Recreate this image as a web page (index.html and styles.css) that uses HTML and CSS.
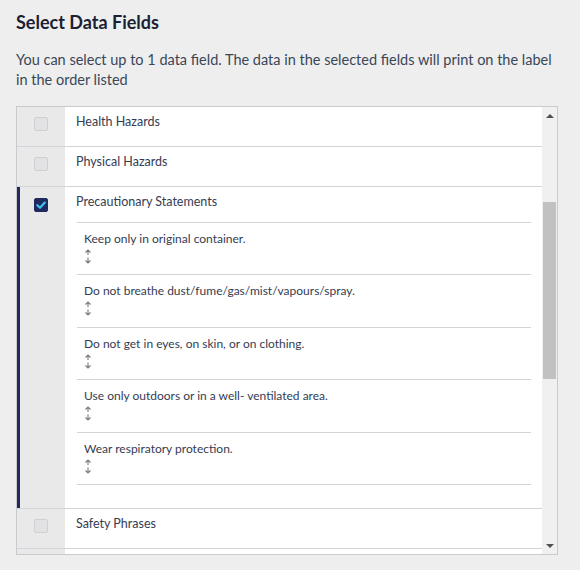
FILE: index.html
```html
<!DOCTYPE html>
<html>
<head>
<meta charset="utf-8">
<link rel="stylesheet" href="styles.css">
</head>
<body>
<div class="page">
  <h1 class="title">Select Data Fields</h1>
  <p class="desc">You can select up to 1 data field. The data in the selected fields will print on the label in the order listed</p>
  <div class="box">
    <div class="list">
      <div class="row">
        <div class="check-col"><span class="cb"></span></div>
        <div class="content"><div class="label">Health Hazards</div></div>
      </div>
      <div class="row">
        <div class="check-col"><span class="cb"></span></div>
        <div class="content"><div class="label">Physical Hazards</div></div>
      </div>
      <div class="row selected">
        <div class="check-col"><span class="cb checked"><svg viewBox="0 0 14 14" width="14" height="14"><path d="M3.3 7.2 L6 9.8 L10.8 4.6" fill="none" stroke="#3cc3ef" stroke-width="2.2" stroke-linecap="round" stroke-linejoin="round"/></svg></span></div>
        <div class="content">
          <div class="label">Precautionary Statements</div>
          <ul class="sub">
            <li class="item"><div class="item-text">Keep only in original container.</div><svg class="arrows" viewBox="0 0 8 15" width="8" height="15"><path d="M4 1 V6 M1.5 3.5 L4 1 L6.5 3.5 M4 8.5 V14 M1.5 11.5 L4 14 L6.5 11.5" fill="none" stroke="#7a7a7a" stroke-width="1.1"/></svg></li>
            <li class="item"><div class="item-text">Do not breathe dust/fume/gas/mist/vapours/spray.</div><svg class="arrows" viewBox="0 0 8 15" width="8" height="15"><path d="M4 1 V6 M1.5 3.5 L4 1 L6.5 3.5 M4 8.5 V14 M1.5 11.5 L4 14 L6.5 11.5" fill="none" stroke="#7a7a7a" stroke-width="1.1"/></svg></li>
            <li class="item"><div class="item-text">Do not get in eyes, on skin, or on clothing.</div><svg class="arrows" viewBox="0 0 8 15" width="8" height="15"><path d="M4 1 V6 M1.5 3.5 L4 1 L6.5 3.5 M4 8.5 V14 M1.5 11.5 L4 14 L6.5 11.5" fill="none" stroke="#7a7a7a" stroke-width="1.1"/></svg></li>
            <li class="item"><div class="item-text">Use only outdoors or in a well- ventilated area.</div><svg class="arrows" viewBox="0 0 8 15" width="8" height="15"><path d="M4 1 V6 M1.5 3.5 L4 1 L6.5 3.5 M4 8.5 V14 M1.5 11.5 L4 14 L6.5 11.5" fill="none" stroke="#7a7a7a" stroke-width="1.1"/></svg></li>
            <li class="item"><div class="item-text">Wear respiratory protection.</div><svg class="arrows" viewBox="0 0 8 15" width="8" height="15"><path d="M4 1 V6 M1.5 3.5 L4 1 L6.5 3.5 M4 8.5 V14 M1.5 11.5 L4 14 L6.5 11.5" fill="none" stroke="#7a7a7a" stroke-width="1.1"/></svg></li>
          </ul>
        </div>
      </div>
      <div class="row">
        <div class="check-col"><span class="cb"></span></div>
        <div class="content"><div class="label">Safety Phrases</div></div>
      </div>
      <div class="row">
        <div class="check-col"><span class="cb"></span></div>
        <div class="content"><div class="label"></div></div>
      </div>
    </div>
    <div class="scrollbar">
      <div class="sb-btn"><span class="tri-up"></span></div>
      <div class="sb-track"><div class="sb-thumb"></div></div>
      <div class="sb-btn"><span class="tri-down"></span></div>
    </div>
  </div>
</div>
</body>
</html>
```
FILE: styles.css
```css
html, body {
  margin: 0;
  padding: 0;
  background: #eeeeee;
}
.page {
  width: 580px;
  height: 570px;
  padding: 11px 0 0 16px;
  box-sizing: border-box;
  font-family: Lato, "Open Sans", sans-serif;
}
.title {
  margin: 0;
  font-size: 18px;
  line-height: 22px;
  font-weight: 700;
  color: #1c2033;
}
.desc {
  margin: 17px 0 0 0;
  width: 540px;
  font-size: 14.5px;
  line-height: 20px;
  color: #3a4657;
}
.box {
  margin-top: 16px;
  width: 542px;
  height: 449px;
  box-sizing: border-box;
  border: 1px solid #c9c9ce;
  background: #ffffff;
  display: flex;
}
.list {
  flex: 1;
  overflow: hidden;
}
.row {
  display: flex;
  border-bottom: 1px solid #d3d3da;
  position: relative;
}
.row.selected::before {
  content: "";
  position: absolute;
  left: 0;
  top: 0;
  bottom: 0;
  width: 3px;
  background: #1f2a5e;
}
.check-col {
  width: 48px;
  flex: none;
  background: #e9e9e9;
  display: flex;
  justify-content: center;
  align-items: flex-start;
}
.cb {
  display: block;
  width: 14px;
  height: 14px;
  margin-top: 10px;
  box-sizing: border-box;
  border: 1px solid #d0d0d3;
  border-radius: 2px;
  background: #e2e2e4;
}
.cb.checked {
  background: #1f2a5e;
  border-color: #1f2a5e;
  margin-top: 11px;
}
.cb.checked svg {
  display: block;
  margin: -1px;
}
.content {
  flex: 1;
  padding: 7px 0 16px 11px;
  min-height: 16px;
}
.label {
  font-size: 12.5px;
  line-height: 16px;
  min-height: 16px;
  color: #353c52;
}
.sub {
  list-style: none;
  margin: 12px 11px 7px 1px;
  padding: 0;
  border-top: 1px solid #d3d3da;
}
.item {
  padding: 8px 7px 10.4px 7px;
  border-bottom: 1px solid #d3d3da;
}
.item-text {
  font-size: 12px;
  line-height: 16px;
  color: #353c52;
}
.arrows {
  display: block;
  margin-top: 2px;
}
.scrollbar {
  width: 15px;
  flex: none;
  background: #f0f0f0;
  display: flex;
  flex-direction: column;
}
.sb-btn {
  height: 17px;
  display: flex;
  align-items: center;
  justify-content: center;
}
.tri-up {
  width: 0;
  height: 0;
  border-left: 4px solid transparent;
  border-right: 4px solid transparent;
  border-bottom: 4px solid #505050;
}
.tri-down {
  width: 0;
  height: 0;
  border-left: 4px solid transparent;
  border-right: 4px solid transparent;
  border-top: 4px solid #505050;
}
.sb-track {
  flex: 1;
  padding: 78px 1px 0 1px;
}
.sb-thumb {
  height: 177px;
  background: #c1c1c1;
}
```
